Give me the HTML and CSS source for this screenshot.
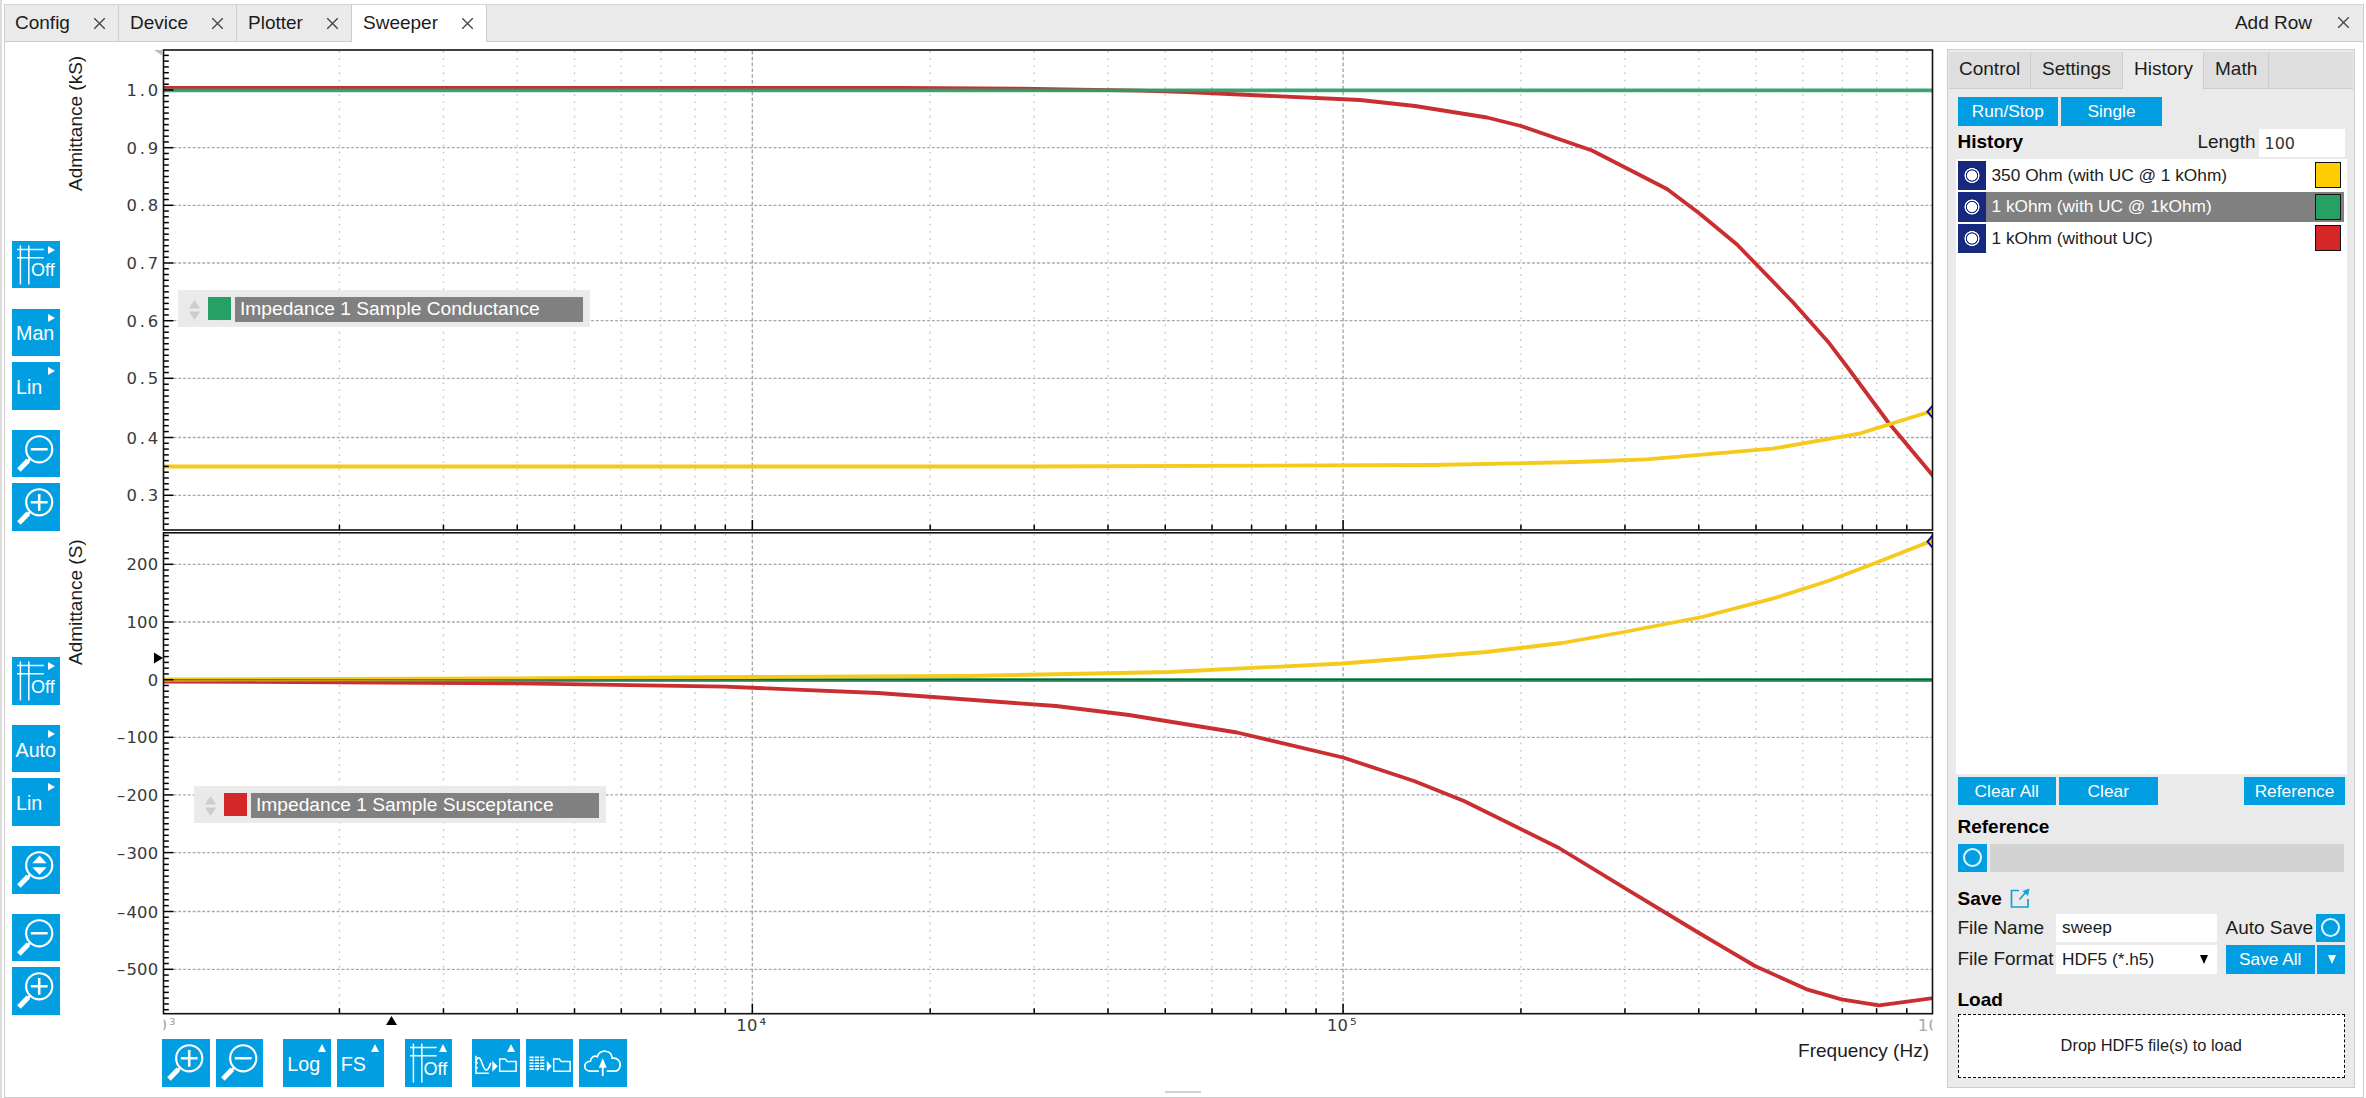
FILE: index.html
```html
<!DOCTYPE html>
<html lang="en">
<head>
<meta charset="utf-8">
<title>Sweeper</title>
<link rel="stylesheet" href="styles.css">
</head>
<body>

<!-- shared icons -->
<svg class="defs" width="0" height="0">
  <symbol id="zoomBase" viewBox="0 0 48 48">
    <circle cx="27.5" cy="19.5" r="13.2" fill="none" stroke="#fff" stroke-width="2.2"/>
    <path d="M19 28.5 L15 32.5" stroke="#fff" stroke-width="2.4"/>
    <path d="M16.5 30.5 L7 40.5" stroke="#fff" stroke-width="5"/>
  </symbol>
  <symbol id="zoomIn" viewBox="0 0 48 48">
    <use href="#zoomBase"/>
    <path d="M19 19.5 H36 M27.5 11 V28" stroke="#fff" stroke-width="2.6"/>
  </symbol>
  <symbol id="zoomOut" viewBox="0 0 48 48">
    <use href="#zoomBase"/>
    <path d="M19 19.5 H36" stroke="#fff" stroke-width="2.6"/>
  </symbol>
  <symbol id="zoomFit" viewBox="0 0 48 48">
    <use href="#zoomBase"/>
    <path d="M27.8 9.5 L35 17.5 H20.5 Z M27.8 29 L35 21.5 H20.5 Z" fill="#fff"/>
  </symbol>
  <symbol id="grid" viewBox="0 0 48 48">
    <path d="M5 8.5 H32 M5 17 H32 M8.5 4.5 V44 M17 4.5 V44" stroke="#fff" stroke-width="1.5"/>
  </symbol>
  <symbol id="folder" viewBox="0 0 20 16">
    <path d="M1 14.5 V1.5 H7 L9 4 H18.5 V14.5 Z" fill="none" stroke="#fff" stroke-width="1.6"/>
  </symbol>
</svg>

<div class="frame">
  <div class="tabBar">
    <div class="tab tabConfig">Config<i class="close"></i></div>
    <div class="tab tabDevice">Device<i class="close"></i></div>
    <div class="tab tabPlotter">Plotter<i class="close"></i></div>
    <div class="tab tabSweeper active">Sweeper<i class="close"></i></div>
    <div class="addRow">Add Row<i class="close"></i></div>
  </div>

  <div class="main">
    <div class="sideTools">
      <div class="toolGroup upper">
        <div class="btn"><svg class="ico"><use href="#grid"/></svg><span class="off">Off</span><i class="more"></i></div>
        <div class="btn gap">Man<i class="more"></i></div>
        <div class="btn">Lin<i class="more"></i></div>
        <div class="btn gap"><svg class="ico"><use href="#zoomOut"/></svg></div>
        <div class="btn"><svg class="ico"><use href="#zoomIn"/></svg></div>
      </div>
      <div class="toolGroup lower">
        <div class="btn"><svg class="ico"><use href="#grid"/></svg><span class="off">Off</span><i class="more"></i></div>
        <div class="btn gap wide">Auto<i class="more"></i></div>
        <div class="btn">Lin<i class="more"></i></div>
        <div class="btn gap"><svg class="ico"><use href="#zoomFit"/></svg></div>
        <div class="btn gap"><svg class="ico"><use href="#zoomOut"/></svg></div>
        <div class="btn"><svg class="ico"><use href="#zoomIn"/></svg></div>
      </div>
    </div>

    <div class="axisNames">
      <div class="axisName nameUpper">Admittance (kS)</div>
      <div class="axisName nameLower">Admittance (S)</div>
    </div>

    <div class="plotArea">
      <svg id="plot" width="1844" height="990" viewBox="96 44 1844 990"></svg>
      <div class="legend legendUpper">
        <i class="sorter"></i><i class="swatch green"></i><span>Impedance 1 Sample Conductance</span>
      </div>
      <div class="legend legendLower">
        <i class="sorter"></i><i class="swatch red"></i><span>Impedance 1 Sample Susceptance</span>
      </div>
      <div class="bottomTools">
        <div class="btn"><svg class="ico"><use href="#zoomIn"/></svg></div>
        <div class="btn"><svg class="ico"><use href="#zoomOut"/></svg></div>
        <div class="btn gap">Log<i class="more up"></i></div>
        <div class="btn">FS<i class="more up"></i></div>
        <div class="btn gap"><svg class="ico"><use href="#grid"/></svg><span class="off">Off</span><i class="more up"></i></div>
        <div class="btn gap">
          <svg class="ico" viewBox="0 0 48 48">
            <path d="M4 17 V34.5 H17 M4 24 H6 M4 29 H6" fill="none" stroke="#fff" stroke-width="1.5"/>
            <path d="M4 23 C5.500 17 8 18 10 24 S15 37 19 24" fill="none" stroke="#fff" stroke-width="1.6"/>
            <path d="M20.500 22 V33 L26 27.500 Z" fill="#fff"/>
            <use href="#folder" x="27" y="18.500" width="19" height="16"/>
          </svg><i class="more up"></i>
        </div>
        <div class="btn">
          <svg class="ico" viewBox="0 0 48 48">
            <path d="M3.500 18.500 H18.500 M3.500 21.500 H18.500 M3.500 24.500 H18.500 M3.500 27.500 H18.500 M3.500 30.500 H18.500" stroke="#fff" stroke-width="1.700" stroke-dasharray="4.200 1.200"/>
            <path d="M21 22 V33 L26 27.500 Z" fill="#fff"/>
            <use href="#folder" x="27" y="18.500" width="19" height="16"/>
          </svg>
        </div>
        <div class="btn">
          <svg class="ico" viewBox="0 0 48 48">
            <path d="M20 32.500 H11 C4 32 4 23 11.500 22.500 C12 18 16 16.500 18.500 18 C21 10 33 10.500 33.500 19.500 C39 18.500 42.500 23 41.500 27.500 C40.500 31.500 38 32.500 36 32.500 H28" fill="none" stroke="#fff" stroke-width="1.700"/>
            <path d="M24 37.500 V27" stroke="#fff" stroke-width="1.900"/>
            <path d="M24 19.500 L28 29 H20 Z" fill="#fff"/>
          </svg>
        </div>
        <div class="freq">Frequency (Hz)</div>
      </div>
    </div>

    <div class="panel">
      <div class="panelTabs">
        <div class="ptab p1">Control</div>
        <div class="ptab p2">Settings</div>
        <div class="ptab p3 active">History</div>
        <div class="ptab p4">Math</div>
      </div>
      <div class="panelBody">
        <div class="row">
          <div class="push w100">Run/Stop</div>
          <div class="push w101">Single</div>
        </div>
        <div class="row lengthRow">
          <b>History</b>
          <span class="right">Length</span>
          <div class="field num">100</div>
        </div>
        <div class="list">
          <div class="item"><i class="eye"></i><span>350 Ohm (with UC @ 1 kOhm)</span><i class="color yellow"></i></div>
          <div class="item selected"><i class="eye"></i><span>1 kOhm (with UC @ 1kOhm)</span><i class="color green"></i></div>
          <div class="item"><i class="eye"></i><span>1 kOhm (without UC)</span><i class="color red"></i></div>
        </div>
        <div class="row">
          <div class="push w98">Clear All</div>
          <div class="push w98">Clear</div>
          <div class="push w101 right">Reference</div>
        </div>
        <div class="head refHead">Reference</div>
        <div class="row">
          <div class="led"></div>
          <div class="refBar"></div>
        </div>
        <div class="head saveHead">Save
          <svg width="21" height="21" viewBox="0 0 21 21">
            <path d="M9 2.500 H1.500 V19 H18 V11" fill="none" stroke="#189fdc" stroke-width="1.700"/>
            <path d="M9.500 11.500 L16 4" stroke="#189fdc" stroke-width="1.700"/>
            <path d="M19.500 0.500 L18 8 L12.500 3 Z" fill="#189fdc"/>
          </svg>
        </div>
        <div class="row">
          <span class="lbl">File Name</span>
          <div class="field">sweep</div>
          <span class="auto">Auto Save</span>
          <div class="led"></div>
        </div>
        <div class="row second">
          <span class="lbl">File Format</span>
          <div class="field">HDF5 (*.h5)<i class="arrow"></i></div>
          <div class="push saveAll">Save All</div>
          <div class="push drop"><i class="arrow white"></i></div>
        </div>
        <div class="head loadHead">Load</div>
        <div class="dropZone">Drop HDF5 file(s) to load</div>
      </div>
    </div>
  </div>
</div>
<div class="handle"></div>

<script src="plot.js"></script>
</body>
</html>
```
FILE: styles.css
```css
* {
  box-sizing: border-box;
}

body {
  margin: 0;
  height: 1098px;
  overflow: hidden;
  background: #fff;
  border-left: 2px solid #dcdcdc;
  font-family: "Liberation Sans", Arial, sans-serif;
  font-size: 19px;
  color: #1c1c1c;
}

i { font-style: normal; }

.defs { position: absolute; }

.frame {
  margin: 4px 2px 0 2px;
  height: 1094px;
  border: 1px solid #ccc;
  border-top: 1px solid #d4d4d4;
}

/* top tabs */
.tabBar {
  display: flex;
  height: 37px;
  background: #eaeaea;
  border-bottom: 1px solid #ccc;
}

.tab {
  display: flex;
  align-items: center;
  justify-content: space-between;
  height: 37px;
  padding: 0 13px 1px 11px;
  border-right: 1px solid #ccc;
}

.tabConfig { width: 114px; padding-left: 10px; }
.tabDevice { width: 118px; }
.tabPlotter { width: 115px; }
.tabSweeper { width: 135px; }

.tab.active { background: #fff; }

.close {
  width: 11px;
  height: 11px;
  background:
    linear-gradient(45deg, transparent 45%, #444 46%, #444 54%, transparent 55%),
    linear-gradient(-45deg, transparent 45%, #444 46%, #444 54%, transparent 55%);
}

.addRow {
  display: flex;
  align-items: center;
  gap: 26px;
  margin-left: auto;
  padding: 0 14px 1px 0;
}

.main {
  display: flex;
  height: 1055px;
}

/* blue tool buttons */
.sideTools {
  width: 48px;
  margin-left: 7px;
}

.toolGroup {
  display: flex;
  flex-direction: column;
  justify-content: flex-end;
  gap: 6px;
}

.toolGroup.upper { height: 488.800px; }
.toolGroup.lower { height: 484px; }

.btn {
  position: relative;
  display: flex;
  flex: none;
  align-items: center;
  width: 47.500px;
  height: 47.500px;
  padding: 3px 0 0 4px;
  background: #019ee2;
  color: #fff;
  font-size: 19.700px;
}

.btn.wide { padding-left: 3.500px; }

.toolGroup .gap { margin-top: 14.200px; }

.ico {
  position: absolute;
  left: 0;
  top: 0;
  width: 47.500px;
  height: 47.500px;
}

.off {
  position: absolute;
  left: 19px;
  top: 19.500px;
  font-size: 18px;
}

.more {
  position: absolute;
  right: 5px;
  top: 5px;
  border-left: 7.500px solid #fff;
  border-top: 4.500px solid transparent;
  border-bottom: 4.500px solid transparent;
}

.more.up {
  border: none;
  border-bottom: 8px solid #fff;
  border-left: 4.500px solid transparent;
  border-right: 4.500px solid transparent;
}

.axisNames {
  width: 36px;
}

.axisName {
  writing-mode: vertical-rl;
  transform: rotate(180deg);
  line-height: 22px;
  margin-left: 5px;
}

.nameUpper { height: 142px; margin-top: 7px; }
.nameLower { height: 140px; margin-top: 334px; }

/* plot */
.plotArea {
  position: relative;
  width: 1844px;
  flex: none;
  margin-top: 2px;
}

#plot { display: block; }

.legend {
  position: absolute;
  display: flex;
  width: 412px;
  height: 37px;
  padding: 7px 7px 5px 11px;
  background: rgba(232, 232, 232, 0.93);
  color: #fff;
  font-size: 19.200px;
}

.legendUpper { left: 82px; top: 246px; }
.legendLower { left: 98px; top: 742px; }

.legend span {
  flex: 1;
  padding-left: 5px;
  margin-left: 4px;
  line-height: 23px;
  background: #808080;
}

.swatch { width: 23px; height: 23px; }

.sorter {
  width: 11px;
  height: 20px;
  margin: 3px 8px 0 0;
  background: #ccc;
  clip-path: polygon(50% 0, 100% 43%, 0 43%, 0 57%, 100% 57%, 50% 100%, 0 57%, 0 43%);
}

.green { background: #26a065; }
.red { background: #d62728; }
.yellow { background: #ffcc00; }

.bottomTools {
  display: flex;
  gap: 6px;
  margin: 5px 0 0 66px;
}

.bottomTools .gap { margin-left: 14.300px; }

.freq {
  margin: 0 11px 0 auto;
  line-height: 23px;
}

/* right panel */
.panel {
  flex: none;
  width: 408px;
  height: 1039px;
  margin: 7px 0 0 7px;
  padding: 2px 1px;
  background: #eaeaea;
  border: 1px solid #ccc;
}

.panelTabs {
  display: flex;
  height: 37px;
  background: #dedede;
  border-bottom: 1px solid #ccc;
}

.ptab {
  height: 37px;
  padding-left: 10px;
  line-height: 34px;
  border-right: 1px solid #ccc;
}

.p1 { width: 82px; }
.p2 { width: 92px; padding-left: 11px; }
.p3 { width: 81px; padding-left: 11px; }
.p4 { width: 65px; padding-left: 11px; }

.ptab.active { background: #eaeaea; }

.panelBody { padding: 8px 8px 0 8.500px; }

.row {
  display: flex;
  align-items: center;
  height: 28.500px;
}

.row .right { margin-left: auto; }

.push {
  height: 28.500px;
  margin-right: 3px;
  background: #019ee2;
  color: #fff;
  font-size: 17.300px;
  line-height: 28px;
  text-align: center;
}

.push.right { margin-right: 0; }

.w98 { width: 98.500px; }
.w100 { width: 100.500px; }
.w101 { width: 101px; }

.lengthRow { margin-top: 3px; }

.lengthRow b, .lengthRow span { padding-bottom: 1px; }

b, .head {
  color: #000;
  font-weight: bold;
}

.field {
  display: flex;
  align-items: center;
  width: 160.500px;
  height: 28.500px;
  padding-left: 6px;
  background: #fff;
  font-size: 17.300px;
}

.field.num {
  width: 86.500px;
  margin-left: 3px;
  padding-top: 1px;
  font-family: "DejaVu Sans", sans-serif;
  font-size: 16px;
  color: #333;
}

.list {
  width: 391px;
  height: 615px;
  margin: 2px 0 2.500px -2px;
  padding: 1px 3px 0 2px;
  background: #fff;
}

.item {
  display: flex;
  align-items: center;
  height: 30.500px;
  margin-bottom: 1px;
  padding-right: 3px;
  font-size: 17.300px;
}

.item.selected {
  background: #808080;
  color: #fff;
}

.item span { margin-left: 6px; }

.eye {
  width: 28px;
  height: 29px;
  background: radial-gradient(circle, #fff 4.800px, #17297f 5.300px, #17297f 5.900px, #fff 6.400px, #fff 7.200px, #17297f 7.800px);
}

.selected .eye { height: 30.500px; }

.color {
  width: 26px;
  height: 26px;
  margin-left: auto;
  border: 1px solid #111;
}

.head { line-height: 22px; }

.refHead { margin: 11px 0 5.500px; }

.saveHead {
  display: flex;
  gap: 8px;
  margin: 16px 0 3.500px;
}

.loadHead { margin: 15px 0 3px; }

.led {
  display: flex;
  align-items: center;
  justify-content: center;
  width: 29px;
  height: 28.500px;
  background: #019ee2;
}

.led::after {
  content: "";
  width: 15px;
  height: 15px;
  border: 2px solid #e4f7ff;
  border-radius: 50%;
}

.refBar {
  width: 354px;
  height: 28.500px;
  margin-left: 3px;
  background: #d3d3d3;
}

.lbl {
  width: 98.500px;
  white-space: nowrap;
}

.auto {
  width: 90px;
  margin-left: 9px;
  white-space: nowrap;
}

.second { margin-top: 3px; }

.arrow {
  margin: 0 8.500px 0 auto;
  border-top: 9px solid #000;
  border-left: 4.500px solid transparent;
  border-right: 4.500px solid transparent;
}

.saveAll {
  width: 89.500px;
  margin: 0 1.500px 0 9px;
}

.drop {
  display: flex;
  align-items: center;
  justify-content: center;
  width: 28.500px;
  margin: 0;
}

.arrow.white {
  margin: 0 0 0 3px;
  border-top-color: #fff;
}

.dropZone {
  width: 387.500px;
  height: 64px;
  border: 1px dashed #000;
  background: #fff;
  font-size: 16.400px;
  line-height: 61px;
  text-align: center;
}

.handle {
  position: absolute;
  left: 1165px;
  top: 1091px;
  width: 36px;
  height: 2px;
  background: #d0d0d0;
}

/* plot drawing */
.axis { fill: none; stroke: #111; stroke-width: 1.600; }
.tick { stroke: #000; stroke-width: 1.500; }
.gridH { stroke: #a8a8a8; stroke-width: 1.300; stroke-dasharray: 2.900 1.900; }
.gridV { stroke: #a8a8a8; stroke-width: 1.400; stroke-dasharray: 3.600 2.200; }
.gridMinor { stroke: #c4c4c4; stroke-width: 1.300; stroke-dasharray: 1.700 5.500; }
.curve { fill: none; stroke-width: 3.800; stroke-linejoin: round; }
.cRed { stroke: #c92f31; }
.cGreen { stroke: #2f9c69; stroke-opacity: 0.92; }
.cYellow { stroke: #f5ca1c; }
.zero { stroke: #000; stroke-opacity: 0.45; stroke-width: 1.500; }
.diamond { fill: none; stroke: #0a0ab0; stroke-width: 2; }

.num text {
  font-family: "DejaVu Sans", sans-serif;
  font-size: 16.400px;
  fill: #3a3a3a;
  text-anchor: middle;
}

.num .faded { fill: #aaa; }
```
FILE: plot.js
```js
var NS = "http://www.w3.org/2000/svg";
var svg = document.getElementById("plot");
var L = 163.5, R = 1932.5;

// position of the labelled values, in plot pixels
var upper = {top: 50, bottom: 530, ticks: [[90, "1.0"], [147.7, "0.9"], [205.3, "0.8"], [263, "0.7"], [320.7, "0.6"], [378.3, "0.5"], [437.5, "0.4"], [495.3, "0.3"]]};
var lower = {top: 532.8, bottom: 1013.7, ticks: [[564.3, "200"], [622, "100"], [679.7, "0"], [737.3, "–100"], [794.9, "–200"], [852.6, "–300"], [911.5, "–400"], [969.3, "–500"]]};

function add(parent, tag, attrs, text) {
  var el = document.createElementNS(NS, tag);
  for (var k in attrs) el.setAttribute(k, attrs[k]);
  if (text) el.textContent = text;
  parent.appendChild(el);
  return el;
}

function line(cls, x1, y1, x2, y2, parent) {
  add(parent || svg, "line", {"class": cls, x1: x1, y1: y1, x2: x2, y2: y2});
}

function freqX(decade, n) {
  return 161.6 + 590.75 * (decade + Math.log10(n));
}

// every character sits in the middle of a 10.6px cell
function cells(parent, str, right, y, cls) {
  var xs = [];
  for (var i = 0; i < str.length; i++) xs.push((right - 10.6 * (str.length - i) + 5.3).toFixed(1));
  add(parent, "text", {x: xs.join(" "), y: y, "class": cls || ""}, str);
}

var clip = add(add(svg, "defs", {}), "clipPath", {id: "inside"});
add(clip, "rect", {x: L, y: 44, width: R - L, height: 1000});

function drawGrid(p) {
  for (var d = 0; d < 3; d++) {
    for (var n = 1; n < 10; n++) {
      var x = freqX(d, n);
      if (x > L + 2) line(n == 1 ? "gridV" : "gridMinor", x, p.top + 1, x, p.bottom);
    }
  }
  p.ticks.forEach(function (t) {
    line("gridH", L + 10, t[0], R, t[0]);
  });
}

function drawAxis(p) {
  var d, n, i, x;
  for (d = 0; d < 3; d++) {
    for (n = 1; n < 10; n++) {
      x = freqX(d, n);
      if (x > L + 2) line("tick", x, p.bottom - (n == 1 ? 10 : 5.5), x, p.bottom);
    }
  }
  // minor ticks between the labels, then out to both ends
  for (i = -1; i < p.ticks.length; i++) {
    var a = i < 0 ? p.ticks[0][0] - 57.7 : p.ticks[i][0];
    var b = i + 1 < p.ticks.length ? p.ticks[i + 1][0] : a + 57.7;
    for (n = 1; n < 10; n++) {
      var y = a + (b - a) * n / 10;
      if (y > p.top + 1 && y < p.bottom - 1) line("tick", L, y, L + 5.3, y);
    }
  }
  p.ticks.forEach(function (t) {
    line("tick", L, t[0], L + 10, t[0]);
    cells(nums, t[1], 158.2, t[0] + 6);
  });
  add(svg, "rect", {"class": "axis", x: L, y: p.top, width: R - L, height: p.bottom - p.top});
}

function curve(cls, pts) {
  add(svg, "polyline", {"class": "curve " + cls, points: pts, "clip-path": "url(#inside)"});
}

var nums = add(svg, "g", {"class": "num"});

drawGrid(upper);
drawGrid(lower);

// conductance
curve("cRed", "163,88 900,88 1020,88.6 1140,90.7 1187,92 1250,95 1360,100 1415,106 1487,117.5 1521,126 1592,150.5 1667,189 1699.5,213.5 1737,244.5 1792.5,301.7 1828,341.7 1846.5,366 1888,422 1934,477");
curve("cGreen", "163,90.3 1934,90.3");
curve("cYellow", "163,466.5 1030,466.5 1433,465 1576,462 1646.5,459.3 1772.5,448.7 1860.5,433.3 1934,410.5");

// susceptance
curve("cRed", "163,681.5 519,683.3 725,686.7 790,689.3 878,693 1056,706 1129,715 1237,732.5 1343,757.5 1414,781 1464,801 1559,848 1624,887.7 1699,933 1717,943.7 1755,966 1807.7,989.7 1841.5,999.3 1879,1005.3 1934,998");
curve("cGreen", "163,680 1934,680");
curve("cYellow", "163,679.5 500,678.5 754,677 966,676 1169,672 1343,663.5 1486,652 1562,643 1624,632 1702,617 1772.5,598.7 1828,581 1874.7,563.3 1934,540");
line("zero", L, 679.7, R, 679.7);

[411.7, 541.6].forEach(function (y) {
  add(svg, "path", {"class": "diamond", "clip-path": "url(#inside)", d: "M1927.5 " + y + " l5.5 -6.5 l5.5 6.5 l-5.5 6.5 Z"});
});

drawAxis(upper);
drawAxis(lower);

// frequency labels, the outer two are cut off by the plot edges
cells(nums, "10⁴", 768, 1031);
cells(nums, "10⁵", 1358.7, 1031);
var cut = add(nums, "g", {"clip-path": "url(#inside)"});
cells(cut, "10³", 177.5, 1031, "faded");
cells(cut, "10⁶", 1949.5, 1031, "faded");

// cursor markers
add(svg, "path", {d: "M154 652.5 L163 658 L154 663.5 Z"});
add(svg, "path", {d: "M386 1025 L391.5 1016 L397 1025 Z"});
add(svg, "path", {d: "M154 50 H163 V56 Z", fill: "#bbb"});
```
